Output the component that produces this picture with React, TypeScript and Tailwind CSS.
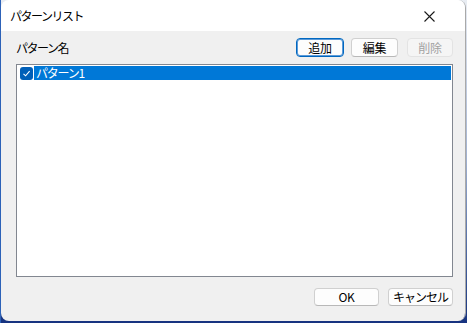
import React from 'react';

const jp = { fontFamily: '"Noto Sans CJK JP", "Noto Sans", sans-serif' };

interface BtnProps {
    label: string;
    width: string;
    focused?: boolean;
    disabled?: boolean;
    tight?: boolean;
}

const DlgButton: React.FC<BtnProps> = ({label, width, focused, disabled, tight}) => {
    let cls = 'border-[#d0d0d0] border-b-[#b8b8b8] bg-[#fdfdfd] text-black';
    if (focused) cls = 'border-[#0067c0] bg-[#fdfdfd] text-black shadow-[inset_0_0_0_1px_#5b9ad8]';
    if (disabled) cls = 'border-[#e3e3e3] bg-[#f5f5f5] text-[#a2a2a2]';
    const track = tight ? 'tracking-[-1px]' : 'tracking-[-0.3px]';
    return (
        <button
            className={`${width} h-full flex items-center justify-center rounded-[4px] border text-[12px] ${track} ${cls}`}
            style={jp}
            disabled={disabled}
        >
            {label}
        </button>
    );
};

export default function App() {
    return (
        <div className="flex w-[467px] h-[323px] bg-gradient-to-b from-[#e9edf3] via-[#9fb0d0] to-[#16327f]">
            <div className="w-px h-full bg-[#2d62b8]"/>
            <div className="flex flex-col w-[465px] h-[321px] rounded-[8px] overflow-hidden border-r border-[#a9a9a9]">
                {/* title bar */}
                <div className="flex items-center h-[31px] bg-white pl-[9px] pr-[30px] shrink-0">
                    <span className="flex-1 text-[12px] tracking-[-1.5px] text-black" style={jp}>パターンリスト</span>
                    <svg width="11" height="11" viewBox="0 0 11 11" className="mt-[1px]">
                        <path d="M0.5 0.5 L10.5 10.5 M10.5 0.5 L0.5 10.5" stroke="#1a1a1a" strokeWidth="1.1"/>
                    </svg>
                </div>

                {/* body */}
                <div className="flex flex-col flex-1 bg-[#f0f0f0] pl-[15px] pr-[12px]">
                    <div className="flex items-center h-[19px] mt-[7px]">
                        <span className="flex-1 text-[12px] tracking-[-1.5px] text-black" style={jp}>パターン名</span>
                        <div className="flex h-full">
                            <DlgButton label="追加" width="w-[48px]" focused/>
                            <div className="w-[7px]"/>
                            <DlgButton label="編集" width="w-[47px]"/>
                            <div className="w-[9px]"/>
                            <DlgButton label="削除" width="w-[46px]" disabled/>
                        </div>
                    </div>

                    <div className="mt-[7px] h-[213px] border border-[#828790] bg-white p-[1px]">
                        <div className="flex items-center h-[14px]">
                            <div className="flex items-center justify-center w-[13px] h-[13px] ml-[2px] rounded-[3px] bg-[#005fb8]">
                                <svg width="9" height="9" viewBox="0 0 9 9">
                                    <path d="M1.5 4.8 L3.6 6.8 L7.6 2.2" fill="none" stroke="#fff" strokeWidth="1.1"/>
                                </svg>
                            </div>
                            <div className="flex items-center flex-1 h-full ml-[1px] bg-[#0078d7] pl-[2px]">
                                <span className="text-[12px] tracking-[-1.2px] text-white leading-none" style={jp}>パターン1</span>
                            </div>
                        </div>
                    </div>

                    <div className="flex justify-end h-[18px] mt-[11px]">
                        <DlgButton label="OK" width="w-[65px]"/>
                        <div className="w-[9px]"/>
                        <DlgButton label="キャンセル" width="w-[65px]" tight/>
                    </div>
                </div>
            </div>
        </div>
    );
}
